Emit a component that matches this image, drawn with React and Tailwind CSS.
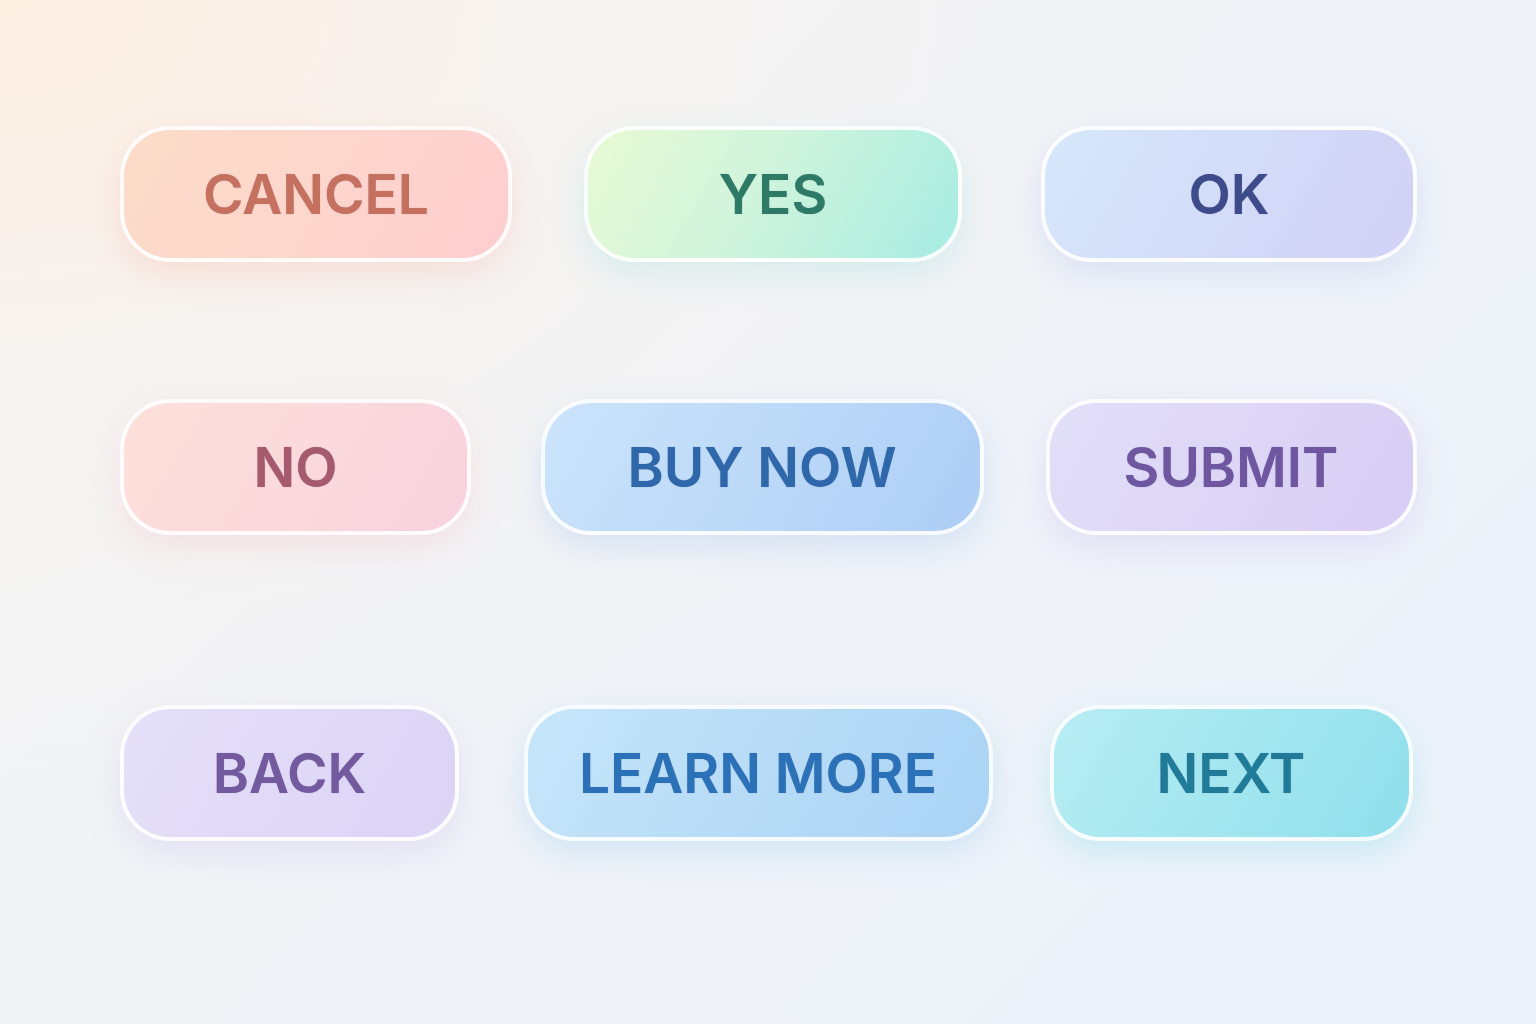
const buttons = [
  [
    { label: "CANCEL", w: "w-[392px]", bg: "bg-[linear-gradient(120deg,#fcdcc8_0%,#fdd6cc_50%,#fdcdcf_100%)]", text: "text-[#c6705f]", glow: "shadow-[0_12px_32px_rgba(247,176,160,0.3)]", place: "justify-self-start" },
    { label: "YES", w: "w-[378px]", bg: "bg-[linear-gradient(120deg,#e8fad4_0%,#d0f4dc_45%,#a6ece2_100%)]", text: "text-[#2d7b66]", glow: "shadow-[0_12px_32px_rgba(150,220,215,0.3)]", place: "justify-self-center ml-[22px]" },
    { label: "OK", w: "w-[376px]", bg: "bg-[linear-gradient(120deg,#d6e8fb_0%,#d3dcf8_50%,#d2d0f6_100%)]", text: "text-[#3e4b8b]", glow: "shadow-[0_12px_32px_rgba(170,190,240,0.3)]", place: "justify-self-center mr-[4px]" },
  ],
  [
    { label: "NO", w: "w-[351px]", bg: "bg-[linear-gradient(120deg,#fde0da_0%,#fbd9dc_50%,#f8d2df_100%)]", text: "text-[#a65a6d]", glow: "shadow-[0_12px_32px_rgba(240,180,195,0.28)]", place: "justify-self-start" },
    { label: "BUY NOW", w: "w-[443px]", bg: "bg-[linear-gradient(120deg,#cbe4fb_0%,#bcd9f8_50%,#accdf5_100%)]", text: "text-[#2e68ab]", glow: "shadow-[0_12px_32px_rgba(150,190,240,0.3)]", place: "justify-self-center" },
    { label: "SUBMIT", w: "w-[371px]", bg: "bg-[linear-gradient(120deg,#e2dff8_0%,#ddd6f6_50%,#d8cdf5_100%)]", text: "text-[#6e57a0]", glow: "shadow-[0_12px_32px_rgba(190,175,240,0.28)]", place: "justify-self-center" },
  ],
  [
    { label: "BACK", w: "w-[339px]", bg: "bg-[linear-gradient(120deg,#e5e1f8_0%,#e0d9f7_50%,#dcd3f5_100%)]", text: "text-[#735a9f]", glow: "shadow-[0_12px_32px_rgba(190,180,235,0.28)]", place: "justify-self-start" },
    { label: "LEARN MORE", w: "w-[469px]", bg: "bg-[linear-gradient(120deg,#c6e6fa_0%,#b8dcf7_50%,#a9d3f5_100%)]", text: "text-[#2a71b7]", glow: "shadow-[0_12px_32px_rgba(140,200,240,0.3)]", place: "justify-self-center mr-[8px]" },
    { label: "NEXT", w: "w-[363px]", bg: "bg-[linear-gradient(120deg,#b8edf3_0%,#a3e6ef_50%,#8fdfec_100%)]", text: "text-[#1f7b98]", glow: "shadow-[0_12px_32px_rgba(120,215,230,0.3)]", place: "justify-self-center" },
  ],
];

function Pill({ b }) {
  return (
    <button
      className={`${b.w} ${b.bg} ${b.glow} ${b.place} h-[136px] rounded-[50px] border-[4px] border-white/90 flex items-center justify-center`}
    >
      <span
        className={`${b.text} text-[55px] font-semibold leading-none [text-shadow:0_0_1px_rgba(40,40,80,0.35)]`}
        style={{ fontFamily: "Inter, 'Liberation Sans', sans-serif" }}
      >
        {b.label}
      </span>
    </button>
  );
}

export default function App() {
  const rowGaps = ["mt-[126px]", "mt-[137px]", "mt-[170px]"];
  return (
    <div className="w-[1536px] h-[1024px] overflow-hidden bg-[radial-gradient(ellipse_at_0%_0%,#fdefe2_0%,rgba(247,243,240,0.6)_28%,rgba(240,243,247,0)_55%),linear-gradient(135deg,#f6f4f2_0%,#f1f3f7_45%,#ebf2fb_100%)]">
      {buttons.map((row, i) => (
        <div
          key={i}
          className={`${rowGaps[i]} px-[120px] grid grid-cols-[400px_444px_454px] gap-x-5 items-center`}
        >
          {row.map((b) => (
            <Pill key={b.label} b={b} />
          ))}
        </div>
      ))}
    </div>
  );
}
